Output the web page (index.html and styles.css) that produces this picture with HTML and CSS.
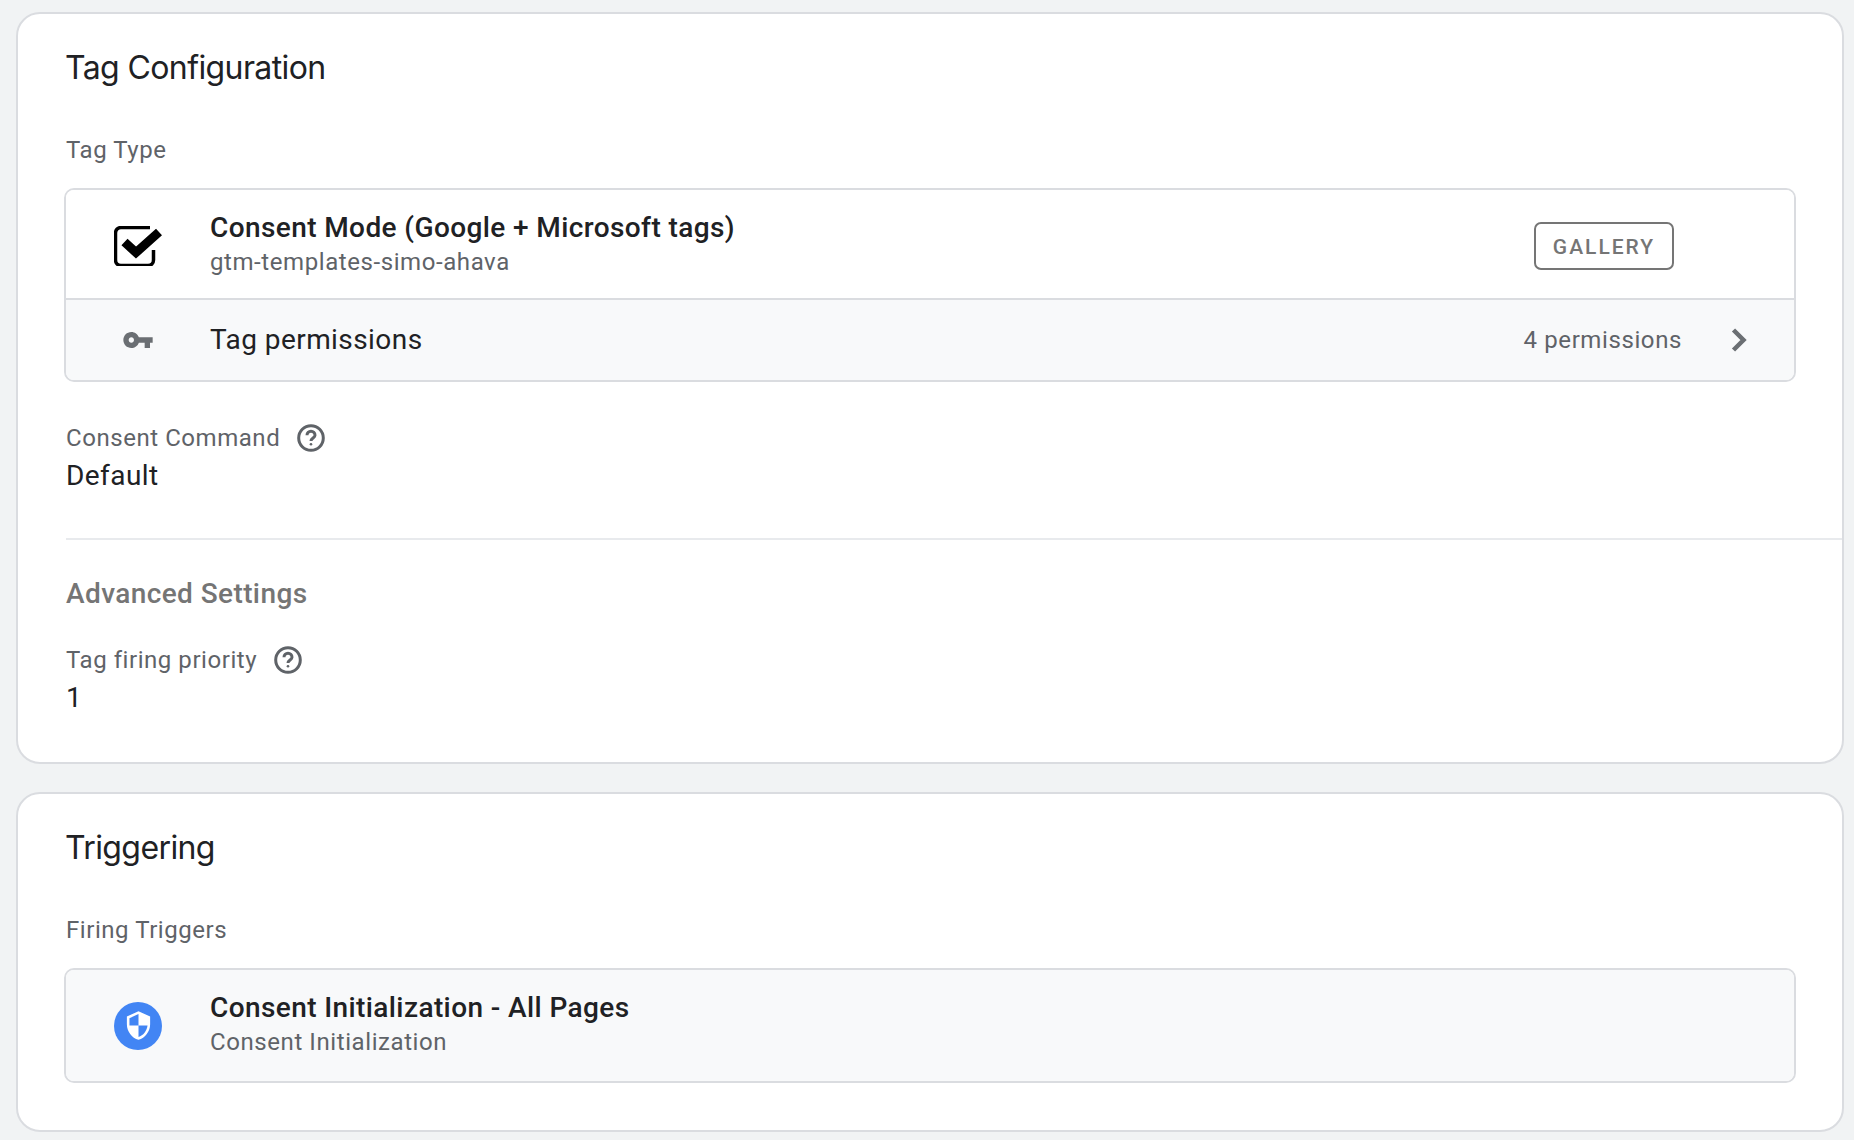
FILE: index.html
```html
<!DOCTYPE html>
<html lang="en">
<head>
<meta charset="utf-8">
<title>Tag</title>
<link rel="stylesheet" href="styles.css">
</head>
<body>
<section class="card card-config">
  <h2 class="card-title">Tag Configuration</h2>
  <div class="label label-type">Tag Type</div>
  <div class="box">
    <div class="row row-main">
      <div class="row-icon">
        <svg class="icon-check" viewBox="0 0 48 40" width="48" height="40"><path class="check-box" d="M36 1.500H7A5.500 5.500 0 0 0 1.500 7v27A5.500 5.500 0 0 0 7 39.500h27a5.500 5.500 0 0 0 5.500-5.500V24"/><path class="check-mark" d="M10.500 16L22 26.500 45 6"/></svg>
      </div>
      <div class="row-text">
        <div class="row-title">Consent Mode (Google + Microsoft tags)</div>
        <div class="row-sub">gtm-templates-simo-ahava</div>
      </div>
      <div class="badge">GALLERY</div>
    </div>
    <div class="row row-perm">
      <div class="row-icon">
        <svg class="icon-key" viewBox="1 6 22 12" width="30" height="16"><path d="M12.65 10C11.83 7.670 9.610 6 7 6c-3.310 0-6 2.690-6 6s2.690 6 6 6c2.610 0 4.830-1.670 5.650-4H17v4h4v-4h2v-4H12.650zM7 14c-1.100 0-2-.9-2-2s.9-2 2-2 2 .9 2 2-.9 2-2 2z"/></svg>
      </div>
      <div class="perm-title">Tag permissions</div>
      <div class="perm-count">4 permissions</div>
      <svg class="icon-chevron" viewBox="0 0 16 24" width="16" height="24"><path d="M2.500 2L12.500 12l-10 10"/></svg>
    </div>
  </div>
  <div class="field field-command">
    <div class="label label-help">Consent Command
      <svg class="icon-help" viewBox="0 0 28 28" width="28" height="28"><circle cx="14" cy="14" r="12.300"/><path d="M10 11.200a4 4 0 0 1 8 0c0 2.600-4 3-4 5.800"/><circle class="dot" cx="14" cy="20.300" r="1.300"/></svg>
    </div>
    <div class="value">Default</div>
  </div>
  <hr class="divider">
  <h3 class="sub-title">Advanced Settings</h3>
  <div class="field">
    <div class="label label-help">Tag firing priority
      <svg class="icon-help" viewBox="0 0 28 28" width="28" height="28"><circle cx="14" cy="14" r="12.300"/><path d="M10 11.200a4 4 0 0 1 8 0c0 2.600-4 3-4 5.800"/><circle class="dot" cx="14" cy="20.300" r="1.300"/></svg>
    </div>
    <div class="value">1</div>
  </div>
</section>
<section class="card card-trigger">
  <h2 class="card-title">Triggering</h2>
  <div class="label label-type">Firing Triggers</div>
  <div class="box box-trigger">
    <div class="row row-main">
      <div class="row-icon">
        <div class="shield-dot">
          <svg viewBox="0 0 24 24" width="31" height="31"><path d="M12 1L3 5v6c0 5.550 3.840 10.740 9 12 5.160-1.260 9-6.450 9-12V5l-9-4zm0 10.990h7c-.53 4.120-3.280 7.790-7 8.940V12H5V6.300l7-3.110v8.800z"/></svg>
        </div>
      </div>
      <div class="row-text">
        <div class="row-title">Consent Initialization - All Pages</div>
        <div class="row-sub">Consent Initialization</div>
      </div>
    </div>
  </div>
</section>
</body>
</html>
```
FILE: styles.css
```css
* { box-sizing: border-box; }
html, body { height: 100%; }
body {
  margin: 0;
  padding: 12px 10px 0 16px;
  background: #f1f3f4;
  font-family: Roboto, "Liberation Sans", sans-serif;
  color: #202124;
  overflow: hidden;
}
.card {
  background: #fff;
  border: 2px solid #dadce0;
  border-radius: 24px;
  padding: 0 0 0 48px;
}
.card-config { height: 752px; }
.card-trigger { height: 340px; margin-top: 28px; }
.card-title {
  margin: 0 0 0 -1px;
  padding-top: 33px;
  font-family: Inter, sans-serif;
  font-size: 32px;
  line-height: 42px;
  font-weight: 400;
  letter-spacing: -0.6px;
}
.label {
  font-size: 24px;
  line-height: 32px;
  letter-spacing: 0.55px;
  color: #5f6368;
}
.label-type { margin-top: 45px; }
.box {
  width: 1732px;
  margin: 22px 0 0 -2px;
  border: 2px solid #dadce0;
  border-radius: 10px;
  overflow: hidden;
}
.row { display: flex; align-items: center; }
.row-main { height: 108px; background: #fff; }
.row-perm { height: 82px; background: #f8f9fa; border-top: 2px solid #dadce0; }
.box-trigger { height: 115px; }
.box-trigger .row-main { height: 111px; background: #f8f9fa; }
.box-trigger .row-text { padding-bottom: 4px; }
.row-icon { width: 144px; flex: none; display: flex; justify-content: center; }
.icon-check { margin-top: 4px; }
.check-box { fill: none; stroke: #000; stroke-width: 3.500; }
.check-mark { fill: none; stroke: #000; stroke-width: 9; }
.icon-key { fill: #6b6f73; }
.row-text { flex: 1; }
.row-title {
  font-size: 28px;
  line-height: 36px;
  font-weight: 500;
  letter-spacing: 0.4px;
  color: #202124;
}
.row-sub {
  font-size: 24px;
  line-height: 32px;
  letter-spacing: 0.58px;
  color: #5f6368;
}
.badge {
  width: 140px;
  height: 48px;
  margin: 3px 120px 0 0;
  border: 2px solid #757575;
  border-radius: 7px;
  font-size: 21px;
  font-weight: 500;
  line-height: 47px;
  letter-spacing: 2px;
  text-align: center;
  color: #757575;
}
.perm-title {
  flex: 1;
  font-size: 28px;
  line-height: 36px;
  letter-spacing: 0.43px;
  color: #202124;
}
.perm-count {
  font-size: 24px;
  letter-spacing: 0.6px;
  color: #5f6368;
}
.icon-chevron {
  margin: 0 47px 0 49px;
  fill: none;
  stroke: #6b6f73;
  stroke-width: 4.500;
}
.field-command { margin-top: 40px; }
.label-help { display: flex; align-items: center; gap: 17px; }
.icon-help { fill: none; stroke: #5f6368; stroke-width: 3; }
.icon-help .dot { fill: #5f6368; stroke: none; }
.value {
  font-size: 28px;
  line-height: 36px;
  margin-top: 4px;
  letter-spacing: 0.43px;
  color: #202124;
}
.divider {
  margin: 44px 0 0;
  border: 0;
  border-top: 2px solid #e8eaed;
}
.sub-title {
  margin: 36px 0 0;
  font-size: 28px;
  line-height: 36px;
  font-weight: 500;
  letter-spacing: 0.4px;
  color: #757575;
}
.sub-title + .field { margin-top: 32px; }
.shield-dot {
  width: 48px;
  height: 48px;
  border-radius: 50%;
  background: #4285f4;
  display: flex;
  align-items: center;
  justify-content: center;
  fill: #fff;
}
```
